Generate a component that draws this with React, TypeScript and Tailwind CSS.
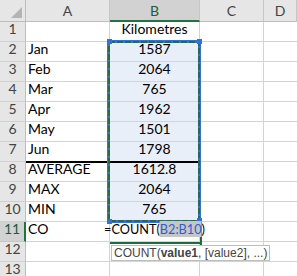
const rows: [string, string][] = [
  ['', 'Kilometres'],
  ['Jan', '1587'],
  ['Feb', '2064'],
  ['Mar', '765'],
  ['Apr', '1962'],
  ['May', '1501'],
  ['Jun', '1798'],
  ['AVERAGE', '1612.8'],
  ['MAX', '2064'],
  ['MIN', '765'],
  ['CO', ''],
  ['', ''],
  ['', ''],
];

function ColHeader({ label, active }: { label: string; active?: boolean }) {
  return (
    <div
      className={
        active
          ? 'flex items-center justify-center bg-[#d2d2d2] border-r border-r-[#c6c6c6] border-b-2 border-b-[#217346] text-[#215a3a]'
          : 'flex items-center justify-center bg-[#e6e6e6] border-r border-r-[#c6c6c6] border-b border-b-[#bdbdbd] text-[#444]'
      }
    >
      {label}
    </div>
  );
}

export default function App() {
  return (
    <div className="relative w-[297px] h-[276px] overflow-hidden bg-white font-['Lato',sans-serif] text-[14px] text-black">
      <div className="grid grid-cols-[26px_84px_90px_64px_1fr] grid-rows-[22px_repeat(13,20px)]">
        <div className="relative bg-[#e6e6e6] border-r border-r-[#bdbdbd] border-b border-b-[#bdbdbd]">
          <svg width="26" height="21" className="absolute left-0 top-0">
            <polygon points="22,7 22,18 11,18" fill="#b4b4b4" />
          </svg>
        </div>
        <ColHeader label="A" />
        <ColHeader label="B" active />
        <ColHeader label="C" />
        <ColHeader label="D" />

        {rows.map(([a, b], i) => {
          const n = i + 1;
          const inRange = n >= 2 && n <= 10;
          const rowActive = n === 11;
          return [
            <div
              key={`h${n}`}
              className={
                rowActive
                  ? 'flex items-end justify-center pb-[2px] bg-[#d2d2d2] border-r-2 border-r-[#217346] border-b border-b-[#c6c6c6] text-[#215a3a]'
                  : 'flex items-end justify-center pb-[2px] bg-[#e6e6e6] border-r border-r-[#bdbdbd] border-b border-b-[#d0d0d0] text-[#444]'
              }
            >
              {n}
            </div>,
            <div
              key={`a${n}`}
              className={
                'flex items-end pl-[2px] pb-[2px] border-r border-b border-[#d4d4d4] ' +
                (n === 7 ? 'border-b-black ' : '') +
                (n === 8 ? 'shadow-[inset_0_1px_0_#000] ' : '')
              }
            >
              {a}
            </div>,
            <div
              key={`b${n}`}
              className={
                'relative flex items-end justify-center pb-[2px] border-r border-b border-[#d4d4d4] ' +
                (inRange ? 'bg-[#e9eff8] ' : '') +
                (n === 7 ? 'border-b-black ' : '') +
                (n === 8 ? 'shadow-[inset_0_1px_0_#000] ' : '')
              }
            >
              {b}
              {rowActive && (
                <span className="absolute left-1/2 bottom-[2px] -translate-x-1/2 whitespace-nowrap text-[12.7px] z-20">
                  =COUNT(<span className="bg-[#c6c6c6] text-[#2f5fcf]">B2:B10</span>)
                </span>
              )}
            </div>,
            <div key={`c${n}`} className="border-r border-b border-[#d4d4d4]" />,
            <div key={`d${n}`} className="border-b border-[#d4d4d4]" />,
          ];
        })}
      </div>

      {/* referenced range B2:B10 */}
      <svg className="absolute left-[107px] top-[40px] pointer-events-none z-10" width="94" height="183">
        <rect x="1.5" y="1.5" width="91" height="180" fill="none" stroke="#3272d6" strokeWidth="3" />
        <rect x="2" y="2" width="90" height="179" fill="none" stroke="#2e6b3b" strokeWidth="2" strokeDasharray="6 2" />
      </svg>
      <div className="absolute left-[107px] top-[39px] w-[5px] h-[5px] bg-[#3272d6] z-10" />
      <div className="absolute left-[197px] top-[39px] w-[5px] h-[5px] bg-[#3272d6] z-10" />
      <div className="absolute left-[107px] top-[219px] w-[5px] h-[5px] bg-[#3272d6] z-10" />
      <div className="absolute left-[197px] top-[218px] w-[5px] h-[5px] bg-[#3272d6] z-10" />

      {/* active cell B11 edges */}
      <div className="absolute left-[200px] top-[222px] w-[2px] h-[23px] bg-[#1e6b3c] z-10" />
      <div className="absolute left-[110px] top-[242px] w-[92px] h-[2px] bg-[#1e6b3c] z-10" />

      {/* function tooltip */}
      <div className="absolute left-[111px] top-[245px] h-[16px] flex items-center px-[2px] bg-white border border-[#bebebe] font-['Liberation_Sans',sans-serif] text-[12px] leading-none text-[#444] whitespace-nowrap z-20">
        COUNT(<b className="font-bold">value1</b>, [value2], ...)
      </div>
    </div>
  );
}
